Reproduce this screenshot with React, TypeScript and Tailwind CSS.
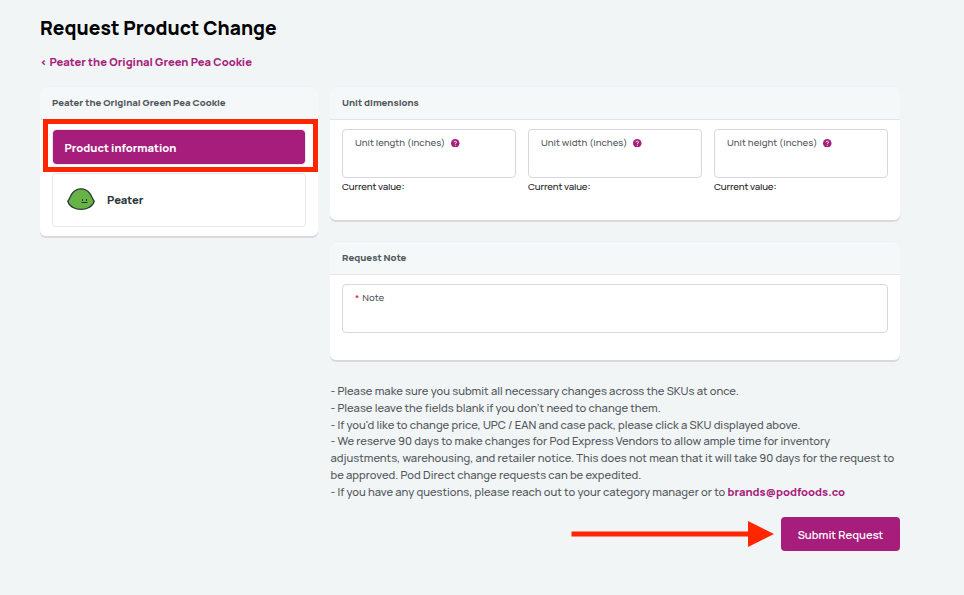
import React from "react";

const DIMENSIONS = ["Unit length (inches)", "Unit width (inches)", "Unit height (inches)"];

const HelpIcon = () => (
  <svg viewBox="0 0 16 16" className="w-[8.5px] h-[8.5px] shrink-0">
    <circle cx="8" cy="8" r="8" fill="#a71d7b" />
    <path
      d="M5.6 6.2C5.6 3.4 10.4 3.4 10.4 6.1C10.4 7.8 8.1 7.7 8.1 9.5M8.1 10.800V12.6"
      fill="none"
      stroke="#fff"
      strokeWidth="1.7"
    />
  </svg>
);

const PeaterIcon = () => (
  <svg viewBox="0 0 28 22" className="relative -top-px w-7 h-[22px] shrink-0">
    <path
      d="M.8 13.2C2.6 11.2 3.2 8 5.4 5.2C7.6 2.3 10.6.9 14 .9S20.400 2.300 22.600 5.200C24.800 8 25.400 11.200 27.200 13.200C26.400 15.800 24.200 18.600 20.800 20C18.800 21.300 17.200 21.300 14 21.300C10.800 21.300 9.200 21.300 7.200 20C3.800 18.600 1.600 15.800 .8 13.200Z"
      fill="#67b346"
      stroke="#2b3638"
      strokeWidth="1.3"
    />
    <path d="M15.500 11V13M19.500 11V13M14.500 14.500H20.500" stroke="#2b3638" strokeWidth="1" />
  </svg>
);

type CardProps = {
  title: string;
  className: string;
  children: React.ReactNode;
};

const Card = ({ title, className, children }: CardProps) => (
  <section className={`bg-white rounded-md shadow-[0_2px_0_#d9d9e0] ${className}`}>
    <h2 className="h-[33px] flex items-center px-3 bg-[#f4f8f9] rounded-t-md border-b border-[#e1e5e7] text-[9.6px] font-extrabold text-[#52575c] shadow-[0_-1px_0_#eef1f3]">
      {title}
    </h2>
    {children}
  </section>
);

const App = () => {
  return (
    <div className="h-[595px] overflow-hidden bg-[#f1f5f6] pl-10 pt-3.5 font-['Manrope','Inter',sans-serif]">
      <h1 className="text-[19.2px] leading-7 font-extrabold text-black">Request Product Change</h1>
      <a className="mt-3 block text-[11.2px] leading-4 font-extrabold text-[#a71d7b]">
        ‹ Peater the Original Green Pea Cookie
      </a>

      <div className="mt-[17px] flex items-start gap-3">
        <Card title="Peater the Original Green Pea Cookie" className="relative w-[278px] h-[149px]">
          <div className="px-3 pt-[9px]">
            <div className="h-9 flex items-center rounded-[4px] border border-[#e5e5ea] bg-[#a71d7b] bg-clip-padding px-[11.5px] pt-[3px] text-[11.2px] font-extrabold text-white">
              Product information
            </div>
            <div className="mt-2 h-[54px] flex items-center gap-3 rounded-[3px] border border-[#e7e8eb] px-3.5 text-[11.2px] font-extrabold text-[#2b3638]">
              <PeaterIcon />
              Peater
            </div>
          </div>
          <div className="absolute left-[3px] top-[32px] w-[275px] h-[53px] border-[5px] border-[#ff2600]" />
        </Card>

        <div className="w-[570px]">
          <Card title="Unit dimensions" className="h-[133px]">
            <div className="grid grid-cols-3 gap-3 px-3 pt-[9px]">
              {DIMENSIONS.map((label) => (
                <div key={label}>
                  <div className="h-[49px] rounded-[4px] border border-[#d7d8de] px-3 pt-[7px]">
                    <label className="flex items-center gap-1.5 text-[9.6px] leading-3 font-medium text-[#52575c]">
                      {label}
                      <HelpIcon />
                    </label>
                  </div>
                  <p className="mt-0.5 text-[9.6px] leading-[14px] font-medium tracking-[-0.12px] text-[#1c2225]">
                    Current value:
                  </p>
                </div>
              ))}
            </div>
          </Card>

          <Card title="Request Note" className="mt-[22px] h-[118px]">
            <div className="px-3 pt-[9px]">
              <div className="h-[49px] rounded-[4px] border border-[#d7d8de] px-3 pt-[7px] text-[9.6px] leading-3 font-medium text-[#52575c]">
                <span className="mr-[3px] text-[#d3134d]">*</span>Note
              </div>
            </div>
          </Card>

          <div className="mt-[23px] pl-[0.5px] text-[11.2px] leading-[16.8px] font-medium text-[#52575c]">
            <p>- Please make sure you submit all necessary changes across the SKUs at once.</p>
            <p>- Please leave the fields blank if you don't need to change them.</p>
            <p>- If you'd like to change price, UPC / EAN and case pack, please click a SKU displayed above.</p>
            <p>
              - We reserve 90 days to make changes for Pod Express Vendors to allow ample time for inventory
              <br />
              adjustments, warehousing, and retailer notice. This does not mean that it will take 90 days for the
              request to be approved. Pod Direct change requests can be expedited.
            </p>
            <p>
              - If you have any questions, please reach out to your category manager or to{" "}
              <a className="font-extrabold text-[#a71d7b]">brands@podfoods.co</a>
            </p>
          </div>

          <div className="mt-4 flex items-center justify-end gap-[7px]">
            <svg viewBox="0 0 203 26" className="w-[203px] h-[26px]">
              <path d="M.5 10.500H177V0L203 13L177 26V15.500H.5Z" fill="#ff2600" />
            </svg>
            <button className="w-[119px] h-[34px] rounded-[4px] bg-[#a71d7b] pt-[3px] text-[11.2px] font-semibold text-white">
              Submit Request
            </button>
          </div>
        </div>
      </div>
    </div>
  );
};

export default App;
